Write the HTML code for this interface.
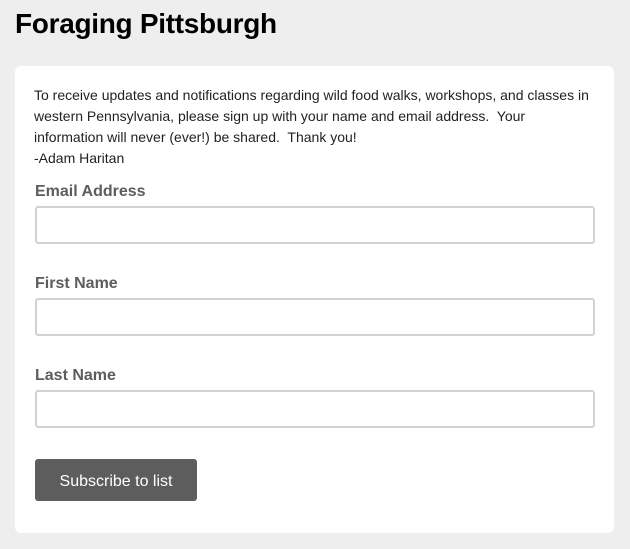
<!DOCTYPE html>
<html><head><style>
body{margin:0;background:#eeeeee;font-family:"Liberation Sans",Arial,sans-serif;width:630px;height:549px;overflow:hidden;position:relative}
h1{position:absolute;left:15px;top:8px;margin:0;font-size:28px;font-weight:bold;color:#000;letter-spacing:-0.3px}
.card{position:absolute;left:15px;top:66px;width:599px;height:467px;background:#fff;border-radius:6px}
.intro{position:absolute;left:19px;top:19px;font-size:14px;line-height:21px;color:#222;width:560px}
.lbl{position:absolute;left:20px;font-size:16px;font-weight:bold;color:#5d5d5d}
.inp{position:absolute;left:20px;width:556px;height:34px;border:2px solid #d2d2d2;border-radius:3px;background:#fff}
.btn{position:absolute;left:20px;top:393px;width:162px;height:42px;background:#5d5d5d;border-radius:3px;color:#fff;font-size:16px;text-align:center;line-height:46px}
</style></head><body>
<h1>Foraging Pittsburgh</h1>
<div class="card">
<div class="intro">To receive updates and notifications regarding wild food walks, workshops, and classes in western Pennsylvania, please sign up with your name and email address.&nbsp; Your<br>information will never (ever!) be shared.&nbsp; Thank you!<br>-Adam Haritan</div>
<div class="lbl" style="top:117px">Email Address</div>
<div class="inp" style="top:140px"></div>
<div class="lbl" style="top:209px">First Name</div>
<div class="inp" style="top:232px"></div>
<div class="lbl" style="top:301px">Last Name</div>
<div class="inp" style="top:324px"></div>
<div class="btn">Subscribe to list</div>
</div>
</body></html>
